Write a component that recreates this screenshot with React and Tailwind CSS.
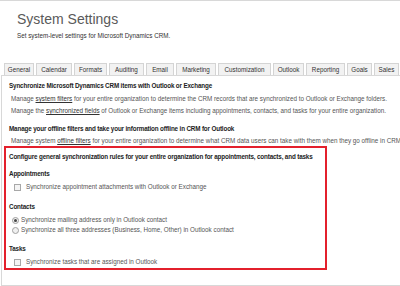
import React from 'react'

const tabs = [
  { label: 'General', w: 'w-[30px]' },
  { label: 'Calendar', w: 'w-[36px]' },
  { label: 'Formats', w: 'w-[33px]' },
  { label: 'Auditing', w: 'w-[35px]' },
  { label: 'Email', w: 'w-[28px]' },
  { label: 'Marketing', w: 'w-[40px]' },
  { label: 'Customization', w: 'w-[53px]' },
  { label: 'Outlook', w: 'w-[31px]' },
  { label: 'Reporting', w: 'w-[39px]' },
  { label: 'Goals', w: 'w-[25px]' },
  { label: 'Sales', w: 'w-[25px]' },
]

const Checkbox = () => (
  <span className="inline-block w-[7px] h-[7px] border border-[#a8a8a8] bg-[#f4f4f4] shrink-0" />
)

const Radio = ({ checked }) => (
  <span className="inline-flex items-center justify-center w-[7px] h-[7px] rounded-full border border-[#a0a0a0] bg-[#f0f0f0] shrink-0">
    {checked && <span className="w-[3px] h-[3px] rounded-full bg-[#444]" />}
  </span>
)

export default function App() {
  return (
    <div
      className="w-[400px] h-[286px] bg-white border-t border-[#d8d8d8] overflow-hidden text-[6.3px] text-[#555]"
      style={{ fontFamily: '"Liberation Sans", Arial, sans-serif' }}
    >
      <div className="pl-[17px] pt-[9px] h-[62px]">
        <h1 className="text-[14px] leading-[18px] text-[#5a5a5a] font-light">System Settings</h1>
        <p className="text-[6.3px] leading-[8px] mt-[4px] text-[#333]">Set system-level settings for Microsoft Dynamics CRM.</p>
      </div>

      <div className="flex gap-[2px] pl-[4px] h-[12px]">
        {tabs.map(t => (
          <div
            key={t.label}
            className={`${t.w} shrink-0 flex items-center justify-center bg-[#f2f2f2] border border-[#d4d4d4] border-b-0 text-[#333]`}
          >
            {t.label}
          </div>
        ))}
      </div>

      <div className="border-l border-b border-t border-[#d8d8d8] ml-[1px] h-[211px] pt-[6px] whitespace-nowrap">
        <div className="pl-[7px] font-bold text-[#222] leading-[8px] tracking-[-0.15px]">Synchronize Microsoft Dynamics CRM items with Outlook or Exchange</div>
        <div className="pl-[9px] mt-[5px] leading-[8px]">
          Manage <span className="underline text-[#333]">system filters</span> for your entire organization to determine the CRM records that are synchronized to Outlook or Exchange folders.
        </div>
        <div className="pl-[9px] mt-[4px] leading-[8px]">
          Manage the <span className="underline text-[#333]">synchronized fields</span> of Outlook or Exchange items including appointments, contacts, and tasks for your entire organization.
        </div>
        <div className="pl-[7px] mt-[10px] font-bold text-[#222] leading-[8px] tracking-[-0.15px]">Manage your offline filters and take your information offline in CRM for Outlook</div>
        <div className="pl-[9px] mt-[4px] leading-[8px] w-[398px] overflow-hidden">
          Manage system <span className="underline text-[#333]">offline filters</span> for your entire organization to determine what CRM data users can take with them when they go offline in CRM for Outlook.
        </div>

        <div className="ml-[2px] mt-[1px] w-[323px] h-[124px] border-2 border-[#e3202c] pt-[5px]">
          <div className="pl-[3px] font-bold text-[#222] leading-[8px] tracking-[-0.15px]">Configure general synchronization rules for your entire organization for appointments, contacts, and tasks</div>

          <div className="pl-[3px] mt-[9px] font-bold text-[#222] leading-[8px] tracking-[-0.15px]">Appointments</div>
          <div className="flex items-center pl-[8px] mt-[5px] gap-[5px] leading-[8px]">
            <Checkbox />
            <span>Synchronize appointment attachments with Outlook or Exchange</span>
          </div>

          <div className="pl-[3px] mt-[12px] font-bold text-[#222] leading-[8px] tracking-[-0.15px]">Contacts</div>
          <div className="flex items-center pl-[6px] mt-[5px] gap-[2px] leading-[8px]">
            <Radio checked />
            <span>Synchronize mailing address only in Outlook contact</span>
          </div>
          <div className="flex items-center pl-[6px] mt-[2px] gap-[2px] leading-[8px]">
            <Radio />
            <span>Synchronize all three addresses (Business, Home, Other) in Outlook contact</span>
          </div>

          <div className="pl-[3px] mt-[11px] font-bold text-[#222] leading-[8px] tracking-[-0.15px]">Tasks</div>
          <div className="flex items-center pl-[8px] mt-[5px] gap-[5px] leading-[8px]">
            <Checkbox />
            <span>Synchronize tasks that are assigned in Outlook</span>
          </div>
        </div>
      </div>
    </div>
  )
}
